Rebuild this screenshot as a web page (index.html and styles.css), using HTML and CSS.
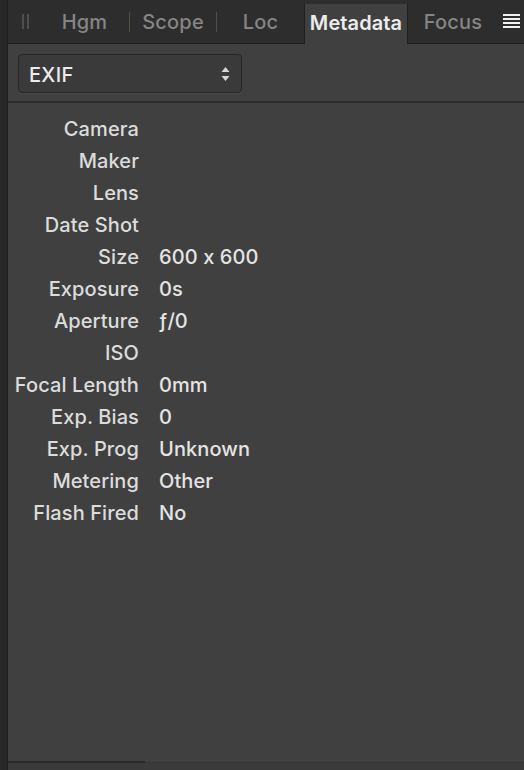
FILE: index.html
```html
<!DOCTYPE html>
<html>
<head>
<meta charset="utf-8">
<link rel="stylesheet" href="styles.css">
</head>
<body>
<div class="app">
  <div class="rail"></div>
  <div class="main">
    <div class="tabbar">
      <div class="grip"><span></span><span></span></div>
      <div class="tab t-hgm">Hgm</div>
      <div class="sep"></div>
      <div class="tab t-scope">Scope</div>
      <div class="sep"></div>
      <div class="tab t-loc">Loc</div>
      <div class="tab t-meta active">Metadata</div>
      <div class="tab t-focus">Focus</div>
      <div class="menu"><span></span><span></span><span></span><span></span></div>
    </div>
    <div class="toolbar">
      <div class="select">
        <span class="select-text">EXIF</span>
        <svg class="arrows" width="9" height="14" viewBox="0 0 9 14"><path d="M4.5 0 L8.5 5 L0.5 5 Z M4.5 14 L0.5 9 L8.5 9 Z" fill="#d6d6d6"/></svg>
      </div>
    </div>
    <div class="content">
      <div class="grid">
        <div class="label">Camera</div><div class="value"></div>
        <div class="label">Maker</div><div class="value"></div>
        <div class="label">Lens</div><div class="value"></div>
        <div class="label">Date Shot</div><div class="value"></div>
        <div class="label">Size</div><div class="value">600 x 600</div>
        <div class="label">Exposure</div><div class="value">0s</div>
        <div class="label">Aperture</div><div class="value">ƒ/0</div>
        <div class="label">ISO</div><div class="value"></div>
        <div class="label">Focal Length</div><div class="value">0mm</div>
        <div class="label">Exp. Bias</div><div class="value">0</div>
        <div class="label">Exp. Prog</div><div class="value">Unknown</div>
        <div class="label">Metering</div><div class="value">Other</div>
        <div class="label">Flash Fired</div><div class="value">No</div>
      </div>
    </div>
    <div class="footer"><div class="scroll"></div></div>
  </div>
</div>
</body>
</html>
```

FILE: styles.css
```css
* { box-sizing: border-box; }
html, body { margin: 0; padding: 0; }
body {
  background: #404040;
  font-family: Inter, "Liberation Sans", Arial, sans-serif;
  color: #dedede;
  width: 524px;
  height: 770px;
  overflow: hidden;
}
.app { display: flex; height: 770px; }
.rail { width: 8px; background: #272727; border-right: 1px solid #1e1e1e; flex: none; }
.main { flex: 1; display: flex; flex-direction: column; min-width: 0; }

.tabbar {
  height: 44px;
  background: #2d2d2d;
  border-bottom: 1px solid #1c1c1c;
  display: flex;
  align-items: stretch;
  flex: none;
}
.grip { width: 32px; display: flex; align-items: center; padding-left: 14px; gap: 3px; }
.grip span { width: 2px; height: 15px; background: #4e4e4e; }
.tab {
  display: flex; align-items: center; justify-content: center;
  font-size: 20px; font-weight: 500; color: #858585; letter-spacing: 0.2px;
  padding-top: 1px;
}
.t-hgm { width: 89px; }
.t-scope { width: 86px; }
.t-loc { width: 87px; }
.t-meta { width: 104px; }
.t-focus { width: 90px; }
.sep { width: 1px; height: 20px; background: #4f4f4f; align-self: center; }
.tab.active {
  margin-top: 4px; margin-bottom: -1px;
  background: #404040; color: #ececec; font-weight: 600;
  border-left: 1px solid #1f1f1f; border-right: 1px solid #1f1f1f;
  padding-top: 0; padding-bottom: 2px; letter-spacing: 0.1px;
}
.menu { display: flex; flex-direction: column; justify-content: center; gap: 2px; padding-left: 5px; padding-bottom: 2px; }
.menu span { width: 17px; height: 2px; background: #f0f0f0; }

.toolbar { padding: 10px 0 8px 10px; border-bottom: 2px solid #2c2c2c; flex: none; }
.select {
  width: 224px; height: 39px;
  background: #3a3a3a;
  border: 1px solid #262626;
  border-radius: 4px;
  box-shadow: 0 1px 0 #4a4a4a;
  display: flex; align-items: center; justify-content: space-between;
  padding: 0 11px 0 10px;
}
.select-text { font-size: 20px; font-weight: 500; color: #ececec; letter-spacing: 0.3px; padding-top: 2px; }

.content { flex: 1; padding-top: 10px; }
.grid {
  display: grid;
  grid-template-columns: 131px 1fr;
  column-gap: 20px;
  grid-auto-rows: 32px;
  align-items: center;
  font-size: 20px; font-weight: 500; letter-spacing: 0.1px;
}
.label { text-align: right; color: #dcdcdc; }
.value { color: #e4e4e4; }

.footer { height: 8px; border-top: 1px solid #363636; background: #3a3a3a; flex: none; display: flex; }
.scroll { width: 137px; height: 2px; background: #2a2a2a; margin-top: -2px; }
```
